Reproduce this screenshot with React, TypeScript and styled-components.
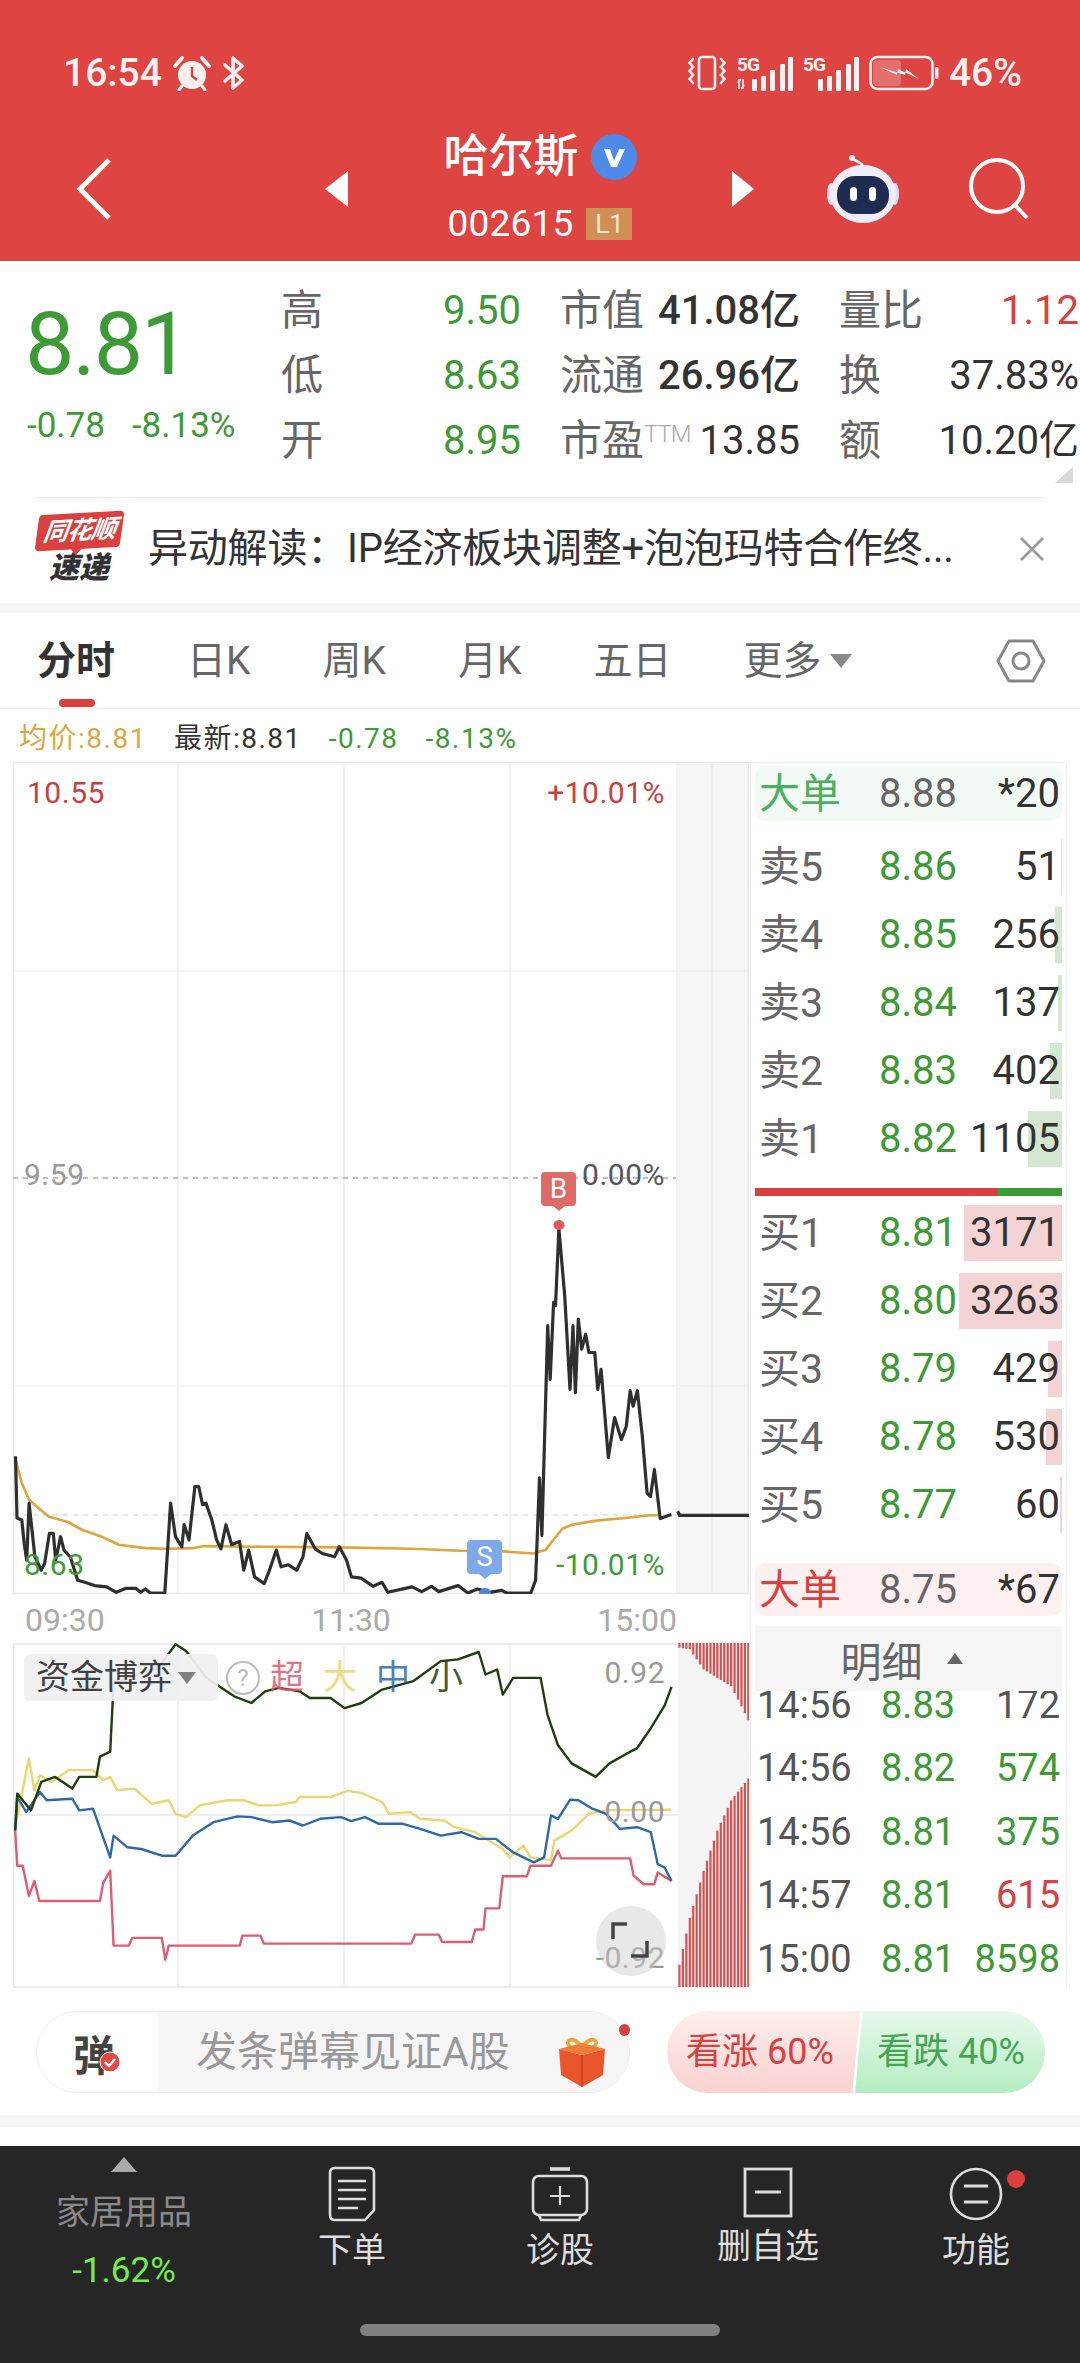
import React from "react";
import styled, { createGlobalStyle } from "styled-components";

const SANS = `Roboto, "Noto Sans CJK SC", sans-serif`;
const RED = "#d9403f";
const GREEN = "#3d9a36";

const Global = createGlobalStyle`
  html, body { margin: 0; padding: 0; background: #fff; }
  body { font-family: ${SANS}; }
  * { box-sizing: border-box; }
`;

const Page = styled.div`
  width: 1080px; height: 2363px; overflow: hidden; background: #fff;
  display: flex; flex-direction: column; color: #333;
`;

/* header */
const Header = styled.header`
  height: 261px; background: #dd4442; color: #fff; display: flex; flex-direction: column;
`;
const StatusBar = styled.div`
  height: 124px; padding: 51px 58px 0 63px; display: flex; justify-content: space-between; align-items: flex-start;
`;
const StatusGroup = styled.div`
  display: flex; align-items: center; gap: 10px; height: 44px;
`;
const StatusText = styled.span`
  font-size: 39px; font-weight: 500; line-height: 44px; letter-spacing: 0;
  color: #fdf1f0;
`;
const Nav = styled.nav`
  height: 137px; padding: 0 0 8px 76px; display: flex; align-items: center;
`;
const NavIcon = styled.svg<{ $ml?: number }>`
  flex: none; margin-left: ${(p) => p.$ml ?? 0}px; display: block;
`;
const TitleBlock = styled.div`
  width: 384px; align-self: flex-start; padding-top: 5px; display: flex; flex-direction: column; align-items: center;
`;
const TitleRow = styled.div`
  display: flex; align-items: center; gap: 12px; height: 56px;
`;
const TitleText = styled.span`
  font-size: 45px; line-height: 56px; font-weight: 500;
`;
const CodeRow = styled.div`
  display: flex; align-items: center; gap: 13px; height: 38px; margin-top: 20px;
`;
const CodeText = styled.span`
  font-size: 37px; line-height: 38px; letter-spacing: 0.2px;
`;
const LevelBadge = styled.span`
  width: 46px; height: 32px; background: #cf8f55; color: #f7e7d2; font-size: 26px; line-height: 32px; text-align: center;
`;

/* quote stats */
const Stats = styled.section`
  height: 236px; display: flex; padding-top: 17px; position: relative;
`;
const PriceBlock = styled.div`
  width: 281px; padding: 14px 0 0 25px; flex: none;
`;
const BigPrice = styled.div`
  font-size: 88px; line-height: 104px; color: ${GREEN}; font-weight: 400; letter-spacing: -2px;
`;
const PriceChange = styled.div`
  display: flex; gap: 27px; color: ${GREEN}; font-size: 35px; line-height: 44px; margin-top: 8px; padding-left: 2px; white-space: nowrap;
`;
const StatGrid = styled.div`
  display: grid; grid-template-columns: 240px 240px 240px; grid-auto-rows: 65px; column-gap: 39px; align-items: center;
`;
const StatCell = styled.div`
  display: flex; justify-content: space-between; align-items: center; height: 65px; white-space: nowrap;
`;
const StatLabel = styled.span`
  font-size: 42px; color: #666; line-height: 65px; display: flex; align-items: flex-start;
`;
const Ttm = styled.sup`
  font-size: 24px; line-height: 36px; color: #aaa; vertical-align: top; margin-top: 8px; font-weight: 300; letter-spacing: -1px;
`;
const StatValue = styled.span<{ $c?: string; $w?: number }>`
  font-size: 40px; line-height: 65px; color: ${(p) => p.$c ?? "#333"}; font-weight: ${(p) => p.$w ?? 400};
`;
const Corner = styled.div`
  position: absolute; right: 7px; bottom: 14px; width: 0; height: 0;
  border-left: 18px solid transparent; border-bottom: 16px solid #d8d8d8;
`;

/* news */
const News = styled.section`
  height: 103px; margin: 0 35px; border-top: 1px solid #ececec; display: flex; align-items: center; gap: 25px; position: relative;
`;
const Logo = styled.div`
  width: 88px; height: 72px; flex: none; display: flex; flex-direction: column; align-items: center;
`;
const LogoFlag = styled.div`
  width: 85px; height: 37px; background: #d9403f; border-radius: 4px; color: #fff; font-size: 25px; line-height: 35px; font-weight: 700;
  text-align: center; transform: skewY(-3deg) skewX(-8deg); font-style: italic; white-space: nowrap; letter-spacing: -1px; position: relative;
  &::after { content: ""; position: absolute; left: 36px; bottom: -6px; border-left: 6px solid transparent; border-right: 6px solid transparent; border-top: 7px solid #d9403f; }
`;
const LogoSub = styled.div`
  font-size: 30px; line-height: 34px; margin-top: 2px; font-weight: 900; color: #333; font-style: italic; letter-spacing: 0;
`;
const NewsText = styled.span`
  font-size: 40px; line-height: 50px; color: #333; white-space: nowrap; letter-spacing: -0.2px; flex: 1;
`;
const NewsClose = styled.svg`
  flex: none; display: block;
`;
const GrayBand = styled.div<{ $mt: number; $h: number; $mb?: number }>`
  height: ${(p) => p.$h}px; background: #f5f5f5; margin-top: ${(p) => p.$mt}px; margin-bottom: ${(p) => p.$mb ?? 0}px; flex: none;
`;

/* tabs */
const Tabs = styled.div`
  height: 96px; border-bottom: 1px solid #ececec; display: flex; align-items: center; padding: 0 0 0 37px; gap: 72px; position: relative; flex: none;
`;
const Tab = styled.span<{ $active?: boolean }>`
  font-size: 39px; line-height: 50px; color: ${(p) => (p.$active ? "#333" : "#666")}; font-weight: ${(p) => (p.$active ? 700 : 400)};
  position: relative; white-space: nowrap; display: flex; align-items: center; gap: 8px;
  ${(p) => p.$active && `&::after { content: ""; position: absolute; left: 22px; bottom: -21px; width: 36px; height: 8px; border-radius: 4px; background: ${RED}; }`}
`;
const TabCaret = styled.i`
  width: 0; height: 0; border-left: 11px solid transparent; border-right: 11px solid transparent; border-top: 14px solid #888; display: block;
`;
const TabGear = styled.svg`
  position: absolute; left: 996px; top: 25px;
`;

/* info */
const InfoRow = styled.div`
  height: 53px; display: flex; align-items: center; gap: 27px; padding: 6px 0 0 19px; flex: none; font-size: 28px; letter-spacing: 1.5px; white-space: nowrap;
`;
const InfoItem = styled.span<{ $c: string }>`
  color: ${(p) => p.$c}; line-height: 36px;
`;

/* main area */
const Main = styled.div`
  display: flex; height: 1226px; flex: none;
`;
const LeftCol = styled.div`
  width: 750px; flex: none; padding-left: 13px; display: flex; flex-direction: column;
`;
const ChartBox = styled.div<{ $h: number }>`
  width: 736px; height: ${(p) => p.$h}px; position: relative; flex: none;
`;
const ChartSvg = styled.svg`
  position: absolute; left: 0; top: 0; display: block;
`;
const ChartLabel = styled.span<{ $l?: number; $r?: number; $t: number; $c: string; $s?: number }>`
  position: absolute; top: ${(p) => p.$t}px;
  ${(p) => (p.$l !== undefined ? `left: ${p.$l}px;` : "")}
  ${(p) => (p.$r !== undefined ? `right: ${p.$r}px;` : "")}
  color: ${(p) => p.$c}; font-size: ${(p) => p.$s ?? 30}px; line-height: 36px; letter-spacing: 0.5px; white-space: nowrap;
`;
const Tag = styled.div<{ $l: number; $t: number; $bg: string }>`
  position: absolute; left: ${(p) => p.$l}px; top: ${(p) => p.$t}px; width: 35px; height: 34px; border-radius: 4px;
  background: ${(p) => p.$bg}; color: #fff; font-size: 28px; line-height: 34px; text-align: center;
  &::after { content: ""; position: absolute; left: 12px; bottom: -5px; border-left: 6px solid transparent; border-right: 6px solid transparent; border-top: 5px solid ${(p) => p.$bg}; }
`;
const TimeRow = styled.div`
  height: 49px; display: flex; justify-content: space-between; align-items: flex-start; padding: 7px 73px 0 12px; color: #aaa; font-size: 32px; line-height: 38px; flex: none;
`;
const Legend = styled.div`
  position: absolute; left: 11px; top: 11px; display: flex; align-items: center;
`;
const LegendPill = styled.div`
  width: 194px; height: 47px; border-radius: 6px; background: #f0f0f0; color: #333; font-size: 34px; line-height: 47px; padding-left: 12px; display: flex; align-items: center; gap: 4px; white-space: nowrap; opacity: .93;
`;
const LegendCaret = styled.i`
  width: 0; height: 0; border-left: 9px solid transparent; border-right: 9px solid transparent; border-top: 12px solid #777; display: block; margin-left: 2px;
`;
const LegendHelp = styled.span`
  width: 34px; height: 34px; border: 2px solid #bbb; border-radius: 50%; color: #bbb; font-size: 24px; line-height: 30px; text-align: center; margin: 0 10px 0 8px; flex: none;
`;
const LegendKey = styled.span<{ $c: string }>`
  color: ${(p) => p.$c}; font-size: 34px; line-height: 47px; margin-right: 19px; opacity: .85;
`;
const ExpandBtn = styled.div`
  position: absolute; left: 583px; top: 263px; width: 70px; height: 70px; border-radius: 50%; background: rgba(205, 205, 205, .45); display: flex; align-items: center; justify-content: center;
`;

/* book */
const Book = styled.aside`
  width: 317px; height: 1226px; flex: none; border-left: 1px solid #eee; border-right: 1px solid #eee; border-top: 1px solid #eee; padding: 3px 4px 0 4px; display: flex; flex-direction: column; overflow: hidden;
`;
const RowGrid = styled.div<{ $h: number }>`
  height: ${(p) => p.$h}px; display: grid; grid-template-columns: 120px 82px 1fr; align-items: center; padding: 0 2px 0 4px; position: relative; flex: none; white-space: nowrap;
`;
const BigOrder = styled(RowGrid)<{ $bg: string }>`
  background: ${(p) => p.$bg}; border-radius: 10px;
`;
const BookLabel = styled.span<{ $c?: string }>`
  font-size: 41px; color: ${(p) => p.$c ?? "#666"}; line-height: 50px; position: relative;
`;
const BookPrice = styled.span<{ $c?: string }>`
  font-size: 40px; line-height: 50px; color: ${(p) => p.$c ?? GREEN}; position: relative;
`;
const BookVol = styled.span<{ $c?: string }>`
  font-size: 40px; line-height: 50px; text-align: right; color: ${(p) => p.$c ?? "#333"}; position: relative;
`;
const VolBar = styled.i<{ $w: number; $buy?: boolean }>`
  position: absolute; right: 0; top: 6px; height: 56px; width: ${(p) => p.$w}px; display: block;
  background: ${(p) => (p.$buy ? "#f3d3d3" : "#d4e8d1")};
`;
const RowGroup = styled.div<{ $mt: number }>`
  margin-top: ${(p) => p.$mt}px; display: flex; flex-direction: column; flex: none;
`;
const Split = styled.div`
  height: 8px; flex: none; margin-top: 15px; display: flex;
`;
const SplitPart = styled.i<{ $c: string; $w: number }>`
  display: block; height: 8px; width: ${(p) => p.$w}px; background: ${(p) => p.$c};
`;
const DetailBtn = styled.div`
  height: 65px; flex: none; margin-top: 10px; background: #f5f5f5; display: flex; align-items: center; justify-content: center; gap: 24px; font-size: 41px; color: #666; position: relative; z-index: 1; padding-right: 14px;
`;
const DetailCaret = styled.i`
  width: 0; height: 0; border-left: 8px solid transparent; border-right: 8px solid transparent; border-bottom: 11px solid #666; display: block;
`;
const Ticks = styled.div`
  margin-top: -18px; display: flex; flex-direction: column; flex: none;
`;
const TickRow = styled.div`
  height: 63.5px; display: grid; grid-template-columns: 124px 86px 1fr; align-items: center; padding: 0 2px 0 2px; font-size: 36px; white-space: nowrap;
`;
const TickTime = styled.span`
  color: #555; font-size: 38px;
`;
const TickPrice = styled.span`
  color: ${GREEN}; font-size: 38px;
`;
const TickVol = styled.span<{ $c: string }>`
  color: ${(p) => p.$c}; font-size: 38px; text-align: right;
`;

/* barrage */
const Barrage = styled.section`
  height: 127px; flex: none; display: flex; gap: 37px; padding: 23px 0 0 36px;
`;
const BarragePill = styled.div`
  width: 594px; height: 82px; border-radius: 41px; overflow: visible; border: 1px solid #eee; display: flex; position: relative; flex: none;
`;
const BarrageIcon = styled.div`
  width: 122px; display: flex; align-items: center; justify-content: center; position: relative; flex: none; font-size: 42px; font-weight: 700; color: #444; padding-right: 8px;
`;
const CheckDot = styled.svg`
  position: absolute; left: 62px; top: 39px;
`;
const BarrageInput = styled.div`
  flex: 1; background: #f5f5f5; border-radius: 0 41px 41px 0; font-size: 41px; line-height: 80px; color: #999; padding-left: 37px; white-space: nowrap;
`;
const Gift = styled.svg`
  position: absolute; left: 520px; top: 23px;
`;
const RedDot = styled.i`
  position: absolute; right: -1px; top: 12px; width: 11px; height: 12px; border-radius: 50%; background: ${RED}; display: block;
`;
const Vote = styled.div`
  width: 378px; height: 82px; border-radius: 41px; overflow: hidden; display: flex; flex: none; position: relative;
`;
const VoteSide = styled.div<{ $up?: boolean }>`
  width: 193px; height: 82px; flex: none; font-size: 36px; line-height: 82px; white-space: nowrap;
  ${(p) =>
    p.$up
      ? `background: linear-gradient(#fdeeec, #f9d2d0); color: ${RED}; padding-left: 19px; clip-path: polygon(0 0, 100% 0, 96% 100%, 0 100%);`
      : `background: linear-gradient(#e8f9ec, #b4ecc0); color: #43a653; padding-left: 22px; margin-left: -5px; width: 190px; clip-path: polygon(4% 0, 100% 0, 100% 100%, 0 100%);`}
`;

/* bottom */
const BottomBar = styled.footer`
  height: 217px; margin-top: 19px; background: #262626; display: flex; flex-direction: column; align-items: center; flex: none;
`;
const BottomGrid = styled.div`
  width: 1080px; height: 178px; display: grid; grid-template-columns: 248px repeat(4, 208px);
`;
const SectorCell = styled.div`
  display: flex; flex-direction: column; align-items: center; padding-top: 11px;
`;
const SectorCaret = styled.i`
  width: 0; height: 0; border-left: 13px solid transparent; border-right: 13px solid transparent; border-bottom: 15px solid #aaa; display: block;
`;
const SectorName = styled.span`
  font-size: 34px; line-height: 44px; color: #8a8a8a; margin-top: 18px; white-space: nowrap;
`;
const SectorPct = styled.span`
  font-size: 35px; line-height: 44px; color: #6ff04f; margin-top: 15px;
`;
const NavCell = styled.div`
  display: flex; flex-direction: column; align-items: center; padding-top: 20px; position: relative;
`;
const NavCellLabel = styled.span`
  font-size: 34px; line-height: 44px; color: #ddd; margin-top: 6px; white-space: nowrap;
`;
const NavDot = styled.i`
  position: absolute; left: 135px; top: 24px; width: 18px; height: 18px; border-radius: 50%; background: ${RED}; display: block;
`;
const HomeBar = styled.div`
  width: 360px; height: 12px; border-radius: 6px; background: #808080; margin-top: 0;
`;

/* data */
const main = (pts: number[][]) => pts.map(([x, y]) => `${(x / 2.063 - 13).toFixed(1)},${(600 + y / 1.493 - 763).toFixed(1)}`).join(" ");
const sub = (pts: number[][]) => pts.map(([x, y]) => `${(x / 1.452 - 13).toFixed(1)},${(1600 + y / 2.98 - 1644).toFixed(1)}`).join(" ");

const PRICE = [[32,1280],[35,1372],[45,1375],[50,1410],[55,1435],[60,1350],[66,1390],[72,1430],[85,1450],[92,1440],[102,1395],[110,1395],[115,1435],[125,1400],[132,1420],[145,1430],[160,1465],[175,1468],[195,1473],[220,1475],[240,1483],[260,1477],[280,1477],[290,1483],[300,1478],[310,1484],[340,1484],[352,1350],[362,1400],[375,1415],[380,1382],[390,1405],[402,1325],[410,1325],[418,1352],[425,1350],[437,1375],[447,1405],[456,1418],[466,1382],[478,1412],[494,1407],[503,1450],[513,1420],[525,1460],[545,1470],[555,1452],[570,1420],[580,1445],[595,1442],[612,1450],[625,1430],[633,1395],[650,1418],[665,1425],[690,1430],[700,1415],[715,1435],[725,1460],[745,1462],[770,1474],[788,1468],[800,1483],[850,1475],[870,1482],[890,1474],[905,1482],[945,1473],[965,1484],[985,1478],[1010,1483],[1035,1480],[1045,1484],[1095,1484],[1105,1465],[1113,1312],[1118,1398],[1130,1085],[1135,1165],[1142,1050],[1146,1055],[1153,940],[1165,1040],[1176,1180],[1182,1085],[1187,1185],[1193,1075],[1200,1120],[1208,1098],[1215,1125],[1227,1125],[1233,1180],[1240,1150],[1255,1282],[1268,1222],[1282,1255],[1292,1235],[1300,1182],[1306,1205],[1315,1182],[1325,1250],[1335,1335],[1342,1340],[1350,1300],[1362,1373],[1385,1367]];
const AFTER = [[1398,1362],[1402,1368],[1545,1368]];
const AVG = [[32,1285],[45,1320],[60,1345],[100,1370],[140,1378],[170,1390],[210,1400],[245,1412],[300,1417],[340,1418],[400,1417],[420,1414],[550,1415],[700,1416],[850,1418],[950,1421],[1040,1422],[1100,1425],[1125,1420],[1160,1388],[1180,1382],[1230,1376],[1290,1372],[1340,1368],[1362,1368]];
const DARK = [[22,690],[25,580],[45,630],[60,545],[80,530],[105,565],[115,530],[140,530],[145,470],[160,455],[165,250],[230,205],[255,135],[270,155],[300,235],[340,290],[365,310],[385,275],[405,265],[435,275],[450,295],[480,295],[500,325],[525,310],[555,270],[600,245],[640,185],[665,180],[695,158],[705,225],[722,210],[730,285],[745,235],[785,235],[795,345],[810,435],[830,490],[865,530],[885,490],[915,455],[925,445],[945,385],[965,318],[975,262]];
const YELLOW = [[22,680],[42,475],[50,570],[58,525],[75,545],[100,510],[135,510],[150,540],[160,530],[170,570],[195,565],[220,610],[245,600],[255,640],[270,650],[290,615],[330,600],[355,600],[375,615],[400,615],[430,605],[435,590],[480,590],[505,572],[525,578],[555,605],[565,640],[595,635],[610,655],[645,660],[660,680],[690,695],[730,745],[740,770],[760,735],[770,770],[800,778],[805,720],[830,690],[855,640],[880,630],[975,628]];
const BLUE = [[22,690],[25,590],[38,635],[58,575],[68,600],[105,595],[115,630],[135,625],[160,770],[165,705],[185,740],[205,745],[235,765],[255,765],[280,705],[310,665],[345,648],[365,650],[395,665],[420,660],[440,675],[465,655],[495,650],[510,662],[530,650],[550,670],[585,670],[610,685],[640,705],[670,695],[695,715],[720,715],[745,755],[775,785],[790,770],[800,645],[810,655],[828,598],[840,600],[860,625],[880,640],[900,685],[925,680],[945,695],[955,790],[965,800],[975,840]];
const PINK = [[22,690],[25,795],[33,795],[42,885],[50,840],[57,900],[145,900],[150,845],[160,810],[165,1033],[187,1033],[192,1010],[235,1010],[240,1075],[245,1033],[348,1033],[352,1003],[378,1003],[383,1027],[597,1027],[603,1000],[637,1000],[642,1022],[685,1022],[690,985],[702,985],[705,922],[725,922],[730,826],[765,826],[770,795],[800,795],[810,750],[815,773],[915,773],[920,825],[935,850],[950,850],[955,815],[975,840]];

const interp = (tbl: number[][], x: number) => {
  for (let i = 1; i < tbl.length; i++) {
    if (x <= tbl[i][0]) {
      const [a, b] = [tbl[i - 1], tbl[i]];
      return a[1] + ((b[1] - a[1]) * (x - a[0])) / (b[0] - a[0]);
    }
  }
  return tbl[tbl.length - 1][1];
};
const TOP_SHAPE = [[985,145],[1000,150],[1020,210],[1040,235],[1060,260],[1080,340],[1087,370]];
const BOT_SHAPE = [[985,1090],[1000,950],[1020,810],[1040,690],[1060,600],[1087,530]];
const BARS = Array.from({ length: 21 }, (_, i) => 985 + i * 5);

const asks = [
  ["卖5", "8.86", "51", 1],
  ["卖4", "8.85", "256", 7],
  ["卖3", "8.84", "137", 4],
  ["卖2", "8.83", "402", 12],
  ["卖1", "8.82", "1105", 34],
] as const;
const bids = [
  ["买1", "8.81", "3171", 98],
  ["买2", "8.80", "3263", 103],
  ["买3", "8.79", "429", 14],
  ["买4", "8.78", "530", 16],
  ["买5", "8.77", "60", 2],
] as const;
const ticks = [
  ["14:56", "8.83", "172", "#555"],
  ["14:56", "8.82", "574", GREEN],
  ["14:56", "8.81", "375", GREEN],
  ["14:57", "8.81", "615", RED],
  ["15:00", "8.81", "8598", GREEN],
] as const;

const Alarm = () => (
  <svg width="40" height="36" viewBox="0 0 40 36">
    <circle cx="20" cy="20" r="14" fill="#fdf1f0" />
    <path d="M3 11 L10 3 M37 11 L30 3" stroke="#fdf1f0" strokeWidth="4" strokeLinecap="round" />
    <path d="M10 31 L7 35 M30 31 L33 35" stroke="#fdf1f0" strokeWidth="3" strokeLinecap="round" />
    <path d="M20 12 V21 L25 25" stroke="#dd4442" strokeWidth="2.5" fill="none" />
  </svg>
);
const Bluetooth = () => (
  <svg width="24" height="36" viewBox="0 0 24 36" fill="none" stroke="#fdf1f0" strokeWidth="3.6" strokeLinejoin="round" strokeLinecap="round">
    <path d="M3 10 L20 25 L11 33 V3 L20 11 L3 26" />
  </svg>
);
const Vibrate = () => (
  <svg width="40" height="36" viewBox="0 0 40 36" fill="none" stroke="#fdf1f0" strokeWidth="2.6">
    <rect x="12" y="2" width="16" height="32" rx="3" />
    <path d="M6 4 L2.5 8 L6 12 L2.5 16 L6 20 L2.5 24 L6 28 M34 4 L37.5 8 L34 12 L37.5 16 L34 20 L37.5 24 L34 28" strokeLinecap="round" />
  </svg>
);
const Signal = ({ lte }: { lte?: boolean }) => (
  <svg width="56" height="36" viewBox="0 0 56 36">
    <text x="0" y="16" fontSize="19" fontWeight="700" fill="#fdf1f0" fontFamily="Roboto, sans-serif" letterSpacing="-1">5G</text>
    {lte && <path d="M2 34 V24 M6 34 V24 M4 24 L1 28 M4 34 L7 30" stroke="#fdf1f0" strokeWidth="1.6" fill="none" />}
    {[[15, 24], [24, 21], [33, 15], [43, 9], [51, 2]].map(([x, y], i) => (
      <rect key={i} x={x} y={y} width={i > 2 ? 5 : 5} height={36 - y} rx="1" fill="#fdf1f0" />
    ))}
  </svg>
);
const Battery = () => (
  <svg width="70" height="36" viewBox="0 0 70 36" fill="none">
    <rect x="1.5" y="2" width="62" height="32" rx="7" stroke="#fdf1f0" strokeWidth="2.6" />
    <rect x="4" y="5" width="28" height="26" rx="4" fill="#fdf1f0" opacity=".25" />
    <path d="M11 12 L28 20 L29 14 L50 24 L37 14 L36 20 Z" fill="#fdf1f0" />
    <rect x="66" y="12" width="3.5" height="12" rx="1.5" fill="#fdf1f0" />
  </svg>
);
const Robot = () => (
  <NavIcon $ml={73} width="72" height="70" viewBox="0 0 72 70">
    <path d="M36 14 C36 8 30 9 25 4" stroke="#f2eefc" strokeWidth="2.5" fill="none" />
    <circle cx="25" cy="4" r="3" fill="#f2eefc" />
    <ellipse cx="4" cy="40" rx="4" ry="11" fill="#e2dcf4" />
    <ellipse cx="68" cy="40" rx="4" ry="11" fill="#e2dcf4" />
    <ellipse cx="36" cy="40" rx="33" ry="29" fill="#f0edfb" />
    <rect x="10" y="22" width="52" height="38" rx="18" fill="#1e2c52" />
    <rect x="23" y="33" width="7" height="14" rx="3.5" fill="#fff" />
    <rect x="42" y="33" width="7" height="14" rx="3.5" fill="#fff" />
  </NavIcon>
);

const DocIcon = () => (
  <svg width="50" height="56" viewBox="0 0 50 56" fill="none" stroke="#ddd" strokeWidth="2.6">
    <path d="M8 2 H42 Q47 2 47 7 V44 L38 54 H8 Q3 54 3 49 V7 Q3 2 8 2 Z" />
    <path d="M11 15 H39 M11 24 H39 M11 33 H39 M11 42 H31" strokeWidth="2.4" />
  </svg>
);
const DiagIcon = () => (
  <svg width="58" height="56" viewBox="0 0 58 56" fill="none" stroke="#ddd" strokeWidth="2.6">
    <path d="M19 3 H39" strokeWidth="3.6" />
    <rect x="2" y="10" width="54" height="39" rx="6" />
    <path d="M8 49 L10 54 H48 L50 49" />
    <path d="M29 20 V39 M19 30 H39" strokeWidth="2.2" />
  </svg>
);
const MinusSquareIcon = () => (
  <svg width="50" height="52" viewBox="0 0 50 52" fill="none" stroke="#ddd" strokeWidth="2.8">
    <rect x="2" y="3" width="46" height="47" />
    <path d="M12 26 H38" strokeWidth="3" />
  </svg>
);
const FuncIcon = () => (
  <svg width="54" height="56" viewBox="0 0 54 56" fill="none" stroke="#ddd" strokeWidth="2.6">
    <circle cx="27" cy="28" r="25" />
    <path d="M15 20 H39 M15 36 H39" strokeWidth="2.8" />
  </svg>
);

export default function App() {
  return (
    <Page>
      <Global />
      <Header>
        <StatusBar>
          <StatusGroup>
            <StatusText>16:54</StatusText>
            <Alarm />
            <Bluetooth />
          </StatusGroup>
          <StatusGroup>
            <Vibrate />
            <Signal lte />
            <Signal />
            <Battery />
            <StatusText>46%</StatusText>
          </StatusGroup>
        </StatusBar>
        <Nav>
          <NavIcon width="36" height="64" viewBox="0 0 36 64" fill="none">
            <path d="M33 3 L4 32 L33 61" stroke="#fff" strokeWidth="5" />
          </NavIcon>
          <NavIcon $ml={213} width="23" height="36" viewBox="0 0 23 36">
            <path d="M23 0 V36 L0 18 Z" fill="#fff" />
          </NavIcon>
          <TitleBlock>
            <TitleRow>
              <TitleText>哈尔斯</TitleText>
              <svg width="46" height="46" viewBox="0 0 46 46">
                <circle cx="23" cy="23" r="23" fill="#4f8ae6" />
                <path d="M13 15 L20 33 H26 L34 15 H28 L23 27 L19 15 Z" fill="#fff" />
              </svg>
            </TitleRow>
            <CodeRow>
              <CodeText>002615</CodeText>
              <LevelBadge>L1</LevelBadge>
            </CodeRow>
          </TitleBlock>
          <NavIcon width="22" height="36" viewBox="0 0 22 36">
            <path d="M0 0 V36 L22 18 Z" fill="#fff" />
          </NavIcon>
          <Robot />
          <NavIcon $ml={70} width="62" height="62" viewBox="0 0 62 62" fill="none" stroke="#fff" strokeWidth="4">
            <circle cx="28" cy="28" r="26" />
            <path d="M46 47 L58 60" />
          </NavIcon>
        </Nav>
      </Header>

      <Stats>
        <PriceBlock>
          <BigPrice>8.81</BigPrice>
          <PriceChange>
            <span>-0.78</span>
            <span>-8.13%</span>
          </PriceChange>
        </PriceBlock>
        <StatGrid>
          <StatCell><StatLabel>高</StatLabel><StatValue $c={GREEN}>9.50</StatValue></StatCell>
          <StatCell><StatLabel>市值</StatLabel><StatValue $w={500}>41.08亿</StatValue></StatCell>
          <StatCell><StatLabel>量比</StatLabel><StatValue $c={RED}>1.12</StatValue></StatCell>
          <StatCell><StatLabel>低</StatLabel><StatValue $c={GREEN}>8.63</StatValue></StatCell>
          <StatCell><StatLabel>流通</StatLabel><StatValue $w={500}>26.96亿</StatValue></StatCell>
          <StatCell><StatLabel>换</StatLabel><StatValue>37.83%</StatValue></StatCell>
          <StatCell><StatLabel>开</StatLabel><StatValue $c={GREEN}>8.95</StatValue></StatCell>
          <StatCell><StatLabel>市盈<Ttm>TTM</Ttm></StatLabel><StatValue>13.85</StatValue></StatCell>
          <StatCell><StatLabel>额</StatLabel><StatValue>10.20亿</StatValue></StatCell>
        </StatGrid>
        <Corner />
      </Stats>

      <News>
        <Logo>
          <LogoFlag>同花顺</LogoFlag>
          <LogoSub>速递</LogoSub>
        </Logo>
        <NewsText>异动解读：IP经济板块调整+泡泡玛特合作终...</NewsText>
        <NewsClose width="26" height="26" viewBox="0 0 26 26" stroke="#999" strokeWidth="2.6">
          <path d="M2 2 L24 24 M24 2 L2 24" />
        </NewsClose>
      </News>
      <GrayBand $mt={3} $h={10} />

      <Tabs>
        <Tab $active>分时</Tab>
        <Tab>日K</Tab>
        <Tab>周K</Tab>
        <Tab>月K</Tab>
        <Tab>五日</Tab>
        <Tab>更多<TabCaret /></Tab>
        <TabGear width="50" height="46" viewBox="0 0 50 46" fill="none" stroke="#888" strokeWidth="3">
          <path d="M13 3 H37 L48 23 L37 43 H13 L2 23 Z" strokeLinejoin="round" />
          <circle cx="25" cy="23" r="8" />
        </TabGear>
      </Tabs>

      <InfoRow>
        <InfoItem $c="#dca63f">均价:8.81</InfoItem>
        <InfoItem $c="#333">最新:8.81</InfoItem>
        <InfoItem $c={GREEN}>-0.78</InfoItem>
        <InfoItem $c={GREEN}>-8.13%</InfoItem>
      </InfoRow>

      <Main>
        <LeftCol>
          <ChartBox $h={832}>
            <ChartSvg width="736" height="832" viewBox="0 0 736 832" fill="none">
              <rect x="663" y="0" width="72" height="832" fill="#f5f5f5" />
              <rect x="0.5" y="0.5" width="735" height="831" stroke="#e6e6e6" strokeWidth="1.5" />
              <path d="M165 0 V832 M331 0 V832 M497 0 V832 M699 0 V832" stroke="#ececec" strokeWidth="1.5" />
              <path d="M0 209 H736 M0 624 H736" stroke="#eee" strokeWidth="1.2" />
              <path d="M0 416 H663" stroke="#aaa" strokeWidth="1.5" strokeDasharray="5 5" />
              <path d="M0 753 H663" stroke="#ccc" strokeWidth="1" strokeDasharray="5 5" />
              <polyline points={main(AVG)} stroke="#dca63f" strokeWidth="2.6" strokeLinejoin="round" />
              <polyline points={main(PRICE)} stroke="#2f2f2f" strokeWidth="3.2" strokeLinejoin="round" />
              <polyline points={main(AFTER)} stroke="#2f2f2f" strokeWidth="3.2" />
              <ellipse cx="546" cy="463" rx="5.5" ry="5" fill="#dd5a58" />
              <ellipse cx="472" cy="831" rx="6" ry="5" fill="#4f86e0" />
            </ChartSvg>
            <ChartLabel $l={14} $t={13} $c="#c4413f">10.55</ChartLabel>
            <ChartLabel $r={84} $t={13} $c="#c4413f">+10.01%</ChartLabel>
            <ChartLabel $l={11} $t={395} $c="#999">9.59</ChartLabel>
            <ChartLabel $r={84} $t={395} $c="#555">0.00%</ChartLabel>
            <ChartLabel $l={11} $t={785} $c={GREEN}>8.63</ChartLabel>
            <ChartLabel $r={84} $t={785} $c={GREEN}>-10.01%</ChartLabel>
            <Tag $l={528} $t={410} $bg="#e06a68">B</Tag>
            <Tag $l={454} $t={778} $bg="#7fa8e8">S</Tag>
          </ChartBox>
          <TimeRow>
            <span>09:30</span>
            <span>11:30</span>
            <span>15:00</span>
          </TimeRow>
          <ChartBox $h={345}>
            <ChartSvg width="736" height="345" viewBox="0 0 736 345" fill="none">
              <rect x="665" y="0" width="71" height="344" fill="#f4f4f4" />
              {BARS.map((x) => {
                const px = x / 1.452 - 13;
                const t = 1600 + interp(TOP_SHAPE, x) / 2.98 - 1644;
                const b = 1600 + interp(BOT_SHAPE, x) / 2.98 - 1644;
                return (
                  <g key={x} fill="#d9504e">
                    <rect x={px} y={0} width={2.2} height={t} />
                    <rect x={px} y={b} width={2.2} height={344 - b} />
                  </g>
                );
              })}
              <path d="M0.5 1 H665 M0.5 1 V344 M0.5 344 H665" stroke="#e6e6e6" strokeWidth="1.5" />
              <path d="M165 0 V344 M331 0 V344 M497 0 V344" stroke="#ececec" strokeWidth="1.5" />
              <path d="M0 172 H665" stroke="#ddd" strokeWidth="1.2" />
              <polyline points={sub(YELLOW)} stroke="#e8d770" strokeWidth="2.4" strokeLinejoin="round" />
              <polyline points={sub(PINK)} stroke="#d95f72" strokeWidth="2.4" strokeLinejoin="round" />
              <polyline points={sub(BLUE)} stroke="#2e68a8" strokeWidth="2.4" strokeLinejoin="round" />
              <polyline points={sub(DARK)} stroke="#1f3d0f" strokeWidth="2.4" strokeLinejoin="round" />
            </ChartSvg>
            <Legend>
              <LegendPill>资金博弈<LegendCaret /></LegendPill>
              <LegendHelp>?</LegendHelp>
              <LegendKey $c="#d95f72">超</LegendKey>
              <LegendKey $c="#e8d770">大</LegendKey>
              <LegendKey $c="#2e68a8">中</LegendKey>
              <LegendKey $c="#1f3d0f">小</LegendKey>
            </Legend>
            <ChartLabel $r={84} $t={12} $c="#999">0.92</ChartLabel>
            <ChartLabel $r={84} $t={151} $c="#999">0.00</ChartLabel>
            <ChartLabel $r={84} $t={297} $c="#999">-0.92</ChartLabel>
            <ExpandBtn>
              <svg width="40" height="40" viewBox="0 0 40 40" fill="none" stroke="#444" strokeWidth="3.5">
                <path d="M2 18 V3 H16 M36 20 V35 H20" />
              </svg>
            </ExpandBtn>
          </ChartBox>
        </LeftCol>

        <Book>
          <BigOrder $h={55} $bg="#f3f9f5">
            <BookLabel $c="#4caf5f">大单</BookLabel>
            <BookPrice $c="#666">8.88</BookPrice>
            <BookVol>*20</BookVol>
          </BigOrder>
          <RowGroup $mt={12}>
            {asks.map(([l, p, v, w]) => (
              <RowGrid key={l} $h={68}>
                <VolBar $w={w} />
                <BookLabel>{l}</BookLabel>
                <BookPrice>{p}</BookPrice>
                <BookVol>{v}</BookVol>
              </RowGrid>
            ))}
          </RowGroup>
          <Split>
            <SplitPart $c={RED} $w={243} />
            <SplitPart $c={GREEN} $w={64} />
          </Split>
          <RowGroup $mt={3}>
            {bids.map(([l, p, v, w]) => (
              <RowGrid key={l} $h={68}>
                <VolBar $w={w} $buy />
                <BookLabel>{l}</BookLabel>
                <BookPrice>{p}</BookPrice>
                <BookVol>{v}</BookVol>
              </RowGrid>
            ))}
          </RowGroup>
          <RowGroup $mt={24}>
            <BigOrder $h={53} $bg="#fdf0f0">
              <BookLabel $c={RED}>大单</BookLabel>
              <BookPrice $c="#666">8.75</BookPrice>
              <BookVol>*67</BookVol>
            </BigOrder>
          </RowGroup>
          <DetailBtn>明细<DetailCaret /></DetailBtn>
          <Ticks>
            {ticks.map(([t, p, v, c], i) => (
              <TickRow key={i}>
                <TickTime>{t}</TickTime>
                <TickPrice>{p}</TickPrice>
                <TickVol $c={c}>{v}</TickVol>
              </TickRow>
            ))}
          </Ticks>
        </Book>
      </Main>

      <Barrage>
        <BarragePill>
          <BarrageIcon>
            弹
            <CheckDot width="22" height="22" viewBox="0 0 22 22">
              <circle cx="11" cy="11" r="10" fill="#e04a48" stroke="#fff" strokeWidth="1" />
              <path d="M6 11 L10 15 L16 8" stroke="#fff" strokeWidth="2.4" fill="none" />
            </CheckDot>
          </BarrageIcon>
          <BarrageInput>发条弹幕见证A股</BarrageInput>
          <Gift width="50" height="52" viewBox="0 0 50 52">
            <path d="M25 12 C14 -2 6 8 14 12 C18 14 22 13 25 12 C28 13 32 14 36 12 C44 8 36 -2 25 12 Z" fill="none" stroke="#e3a93a" strokeWidth="3.5" />
            <path d="M2 14 L25 20 L48 14 L46 40 L25 52 L4 40 Z" fill="#e8562d" />
            <path d="M2 14 L25 8 L48 14 L25 20 Z" fill="#f07c3c" />
            <path d="M25 20 V52" stroke="#c93f1d" strokeWidth="1.5" />
          </Gift>
          <RedDot />
        </BarragePill>
        <Vote>
          <VoteSide $up>看涨 60%</VoteSide>
          <VoteSide>看跌 40%</VoteSide>
        </Vote>
      </Barrage>
      <GrayBand $mt={0} $h={12} />

      <BottomBar>
        <BottomGrid>
          <SectorCell>
            <SectorCaret />
            <SectorName>家居用品</SectorName>
            <SectorPct>-1.62%</SectorPct>
          </SectorCell>
          <NavCell><DocIcon /><NavCellLabel>下单</NavCellLabel></NavCell>
          <NavCell><DiagIcon /><NavCellLabel>诊股</NavCellLabel></NavCell>
          <NavCell><MinusSquareIcon /><NavCellLabel>删自选</NavCellLabel></NavCell>
          <NavCell><FuncIcon /><NavCellLabel>功能</NavCellLabel><NavDot /></NavCell>
        </BottomGrid>
        <HomeBar />
      </BottomBar>
    </Page>
  );
}
